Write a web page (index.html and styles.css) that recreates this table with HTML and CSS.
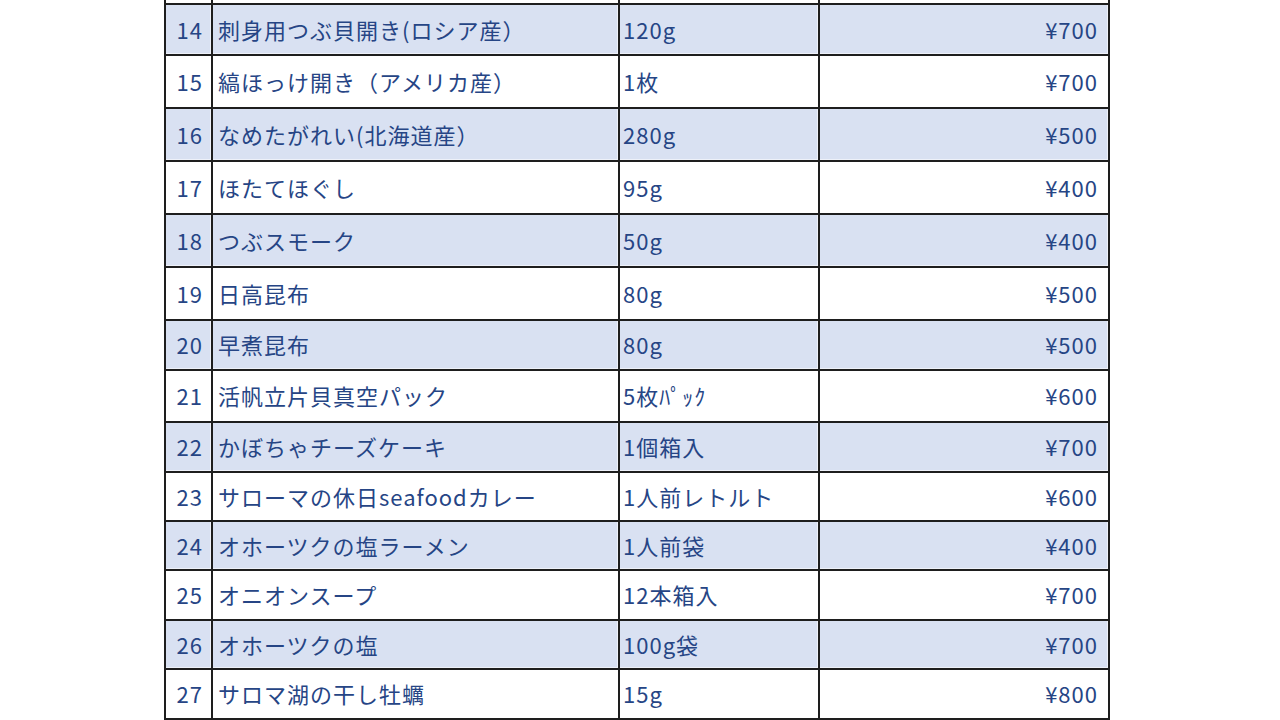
FILE: index.html
```html
<!DOCTYPE html>
<html lang="ja">
<head>
<meta charset="utf-8">
<title>商品一覧</title>
<link rel="stylesheet" href="styles.css">
</head>
<body>
<div class="sheet">
  <div class="row r5"><div class="c num"></div><div class="c name"></div><div class="c qty"></div><div class="c price"></div></div>
  <div class="row r51 alt"><div class="c num">14</div><div class="c name">刺身用つぶ貝開き(ロシア産）</div><div class="c qty">120g</div><div class="c price">¥700</div></div>
  <div class="row r53"><div class="c num">15</div><div class="c name">縞ほっけ開き（アメリカ産）</div><div class="c qty">1枚</div><div class="c price">¥700</div></div>
  <div class="row r53 alt"><div class="c num">16</div><div class="c name">なめたがれい(北海道産）</div><div class="c qty">280g</div><div class="c price">¥500</div></div>
  <div class="row r53"><div class="c num">17</div><div class="c name">ほたてほぐし</div><div class="c qty">95g</div><div class="c price">¥400</div></div>
  <div class="row r53 alt"><div class="c num">18</div><div class="c name">つぶスモーク</div><div class="c qty">50g</div><div class="c price">¥400</div></div>
  <div class="row r53"><div class="c num">19</div><div class="c name">日高昆布</div><div class="c qty">80g</div><div class="c price">¥500</div></div>
  <div class="row r50 alt"><div class="c num">20</div><div class="c name">早煮昆布</div><div class="c qty">80g</div><div class="c price">¥500</div></div>
  <div class="row r52"><div class="c num">21</div><div class="c name">活帆立片貝真空パック</div><div class="c qty">5枚ﾊﾟｯｸ</div><div class="c price">¥600</div></div>
  <div class="row r50 alt"><div class="c num">22</div><div class="c name">かぼちゃチーズケーキ</div><div class="c qty">1個箱入</div><div class="c price">¥700</div></div>
  <div class="row r49"><div class="c num">23</div><div class="c name">サローマの休日seafoodカレー</div><div class="c qty">1人前レトルト</div><div class="c price">¥600</div></div>
  <div class="row r49 alt"><div class="c num">24</div><div class="c name">オホーツクの塩ラーメン</div><div class="c qty">1人前袋</div><div class="c price">¥400</div></div>
  <div class="row r50"><div class="c num">25</div><div class="c name">オニオンスープ</div><div class="c qty">12本箱入</div><div class="c price">¥700</div></div>
  <div class="row r49 alt"><div class="c num">26</div><div class="c name">オホーツクの塩</div><div class="c qty">100g袋</div><div class="c price">¥700</div></div>
  <div class="row r50"><div class="c num">27</div><div class="c name">サロマ湖の干し牡蠣</div><div class="c qty">15g</div><div class="c price">¥800</div></div>
  <div class="row r50 alt"><div class="c num"></div><div class="c name"></div><div class="c qty"></div><div class="c price"></div></div>
</div>
</body>
</html>
```

FILE: styles.css
```css
* { box-sizing: border-box; }
html, body { margin: 0; padding: 0; background: #ffffff; }
body {
  width: 1280px;
  height: 720px;
  overflow: hidden;
  font-family: "Noto Sans CJK JP", "Noto Sans", sans-serif;
  font-size: 22px;
  font-weight: 400;
  letter-spacing: 1px;
  color: #264585;
}
.sheet {
  margin-left: 164px;
  width: 946px;
  border-left: 2px solid #1e1e1e;
}
.row {
  display: grid;
  grid-template-columns: 47px 407px 200px 290px;
  border-bottom: 2px solid #1e1e1e;
}
.r5 { height: 5px; }
.r49 { height: 49px; }
.r50 { height: 50px; }
.r51 { height: 51px; }
.r52 { height: 52px; }
.r53 { height: 53px; }
.c {
  border-right: 2px solid #1e1e1e;
  display: flex;
  align-items: center;
  white-space: nowrap;
  overflow: hidden;
  line-height: 1;
  padding-bottom: 2px;
}
.alt .c {
  background: #d9e1f2;
  box-shadow: inset -1px -1px 0 #eef1f9;
}
.num { justify-content: flex-end; padding-right: 8px; }
.name { padding-left: 5px; }
.qty { padding-left: 3px; }
.price { justify-content: flex-end; padding-right: 10px; }
```
